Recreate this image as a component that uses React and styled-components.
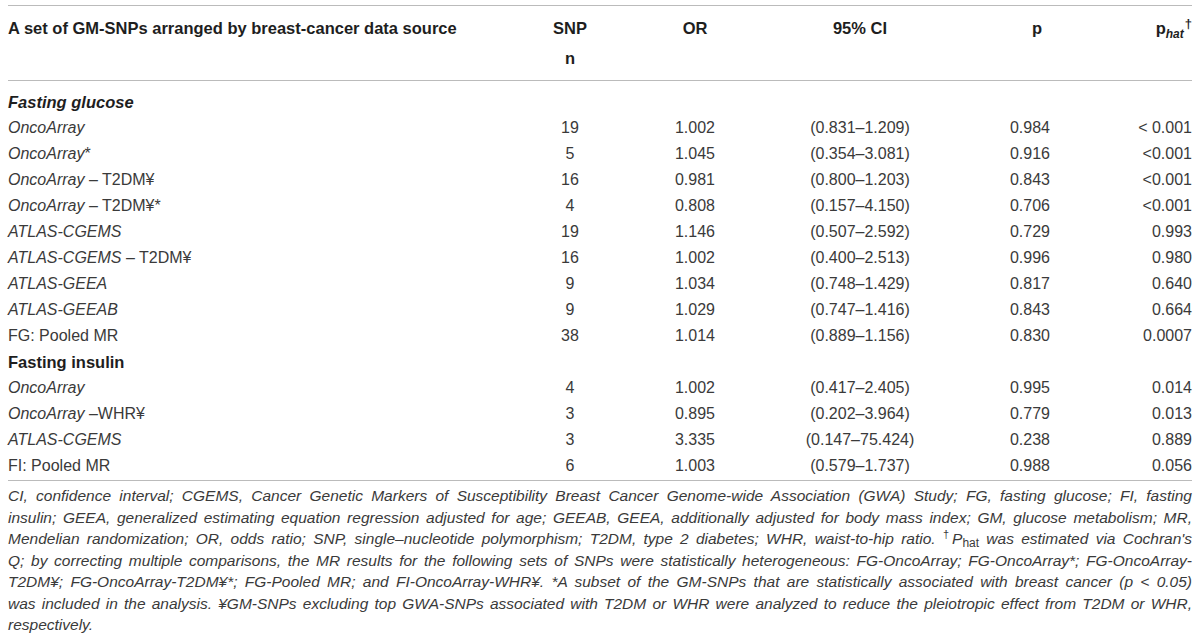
import React from 'react';
import styled, { createGlobalStyle } from 'styled-components';

const GlobalStyle = createGlobalStyle`
  html, body {
    margin: 0;
    padding: 0;
    background: #fff;
  }
  body {
    font-family: "Liberation Sans", Arial, Helvetica, sans-serif;
    color: #3a3a3a;
  }
`;

// column widths, first column holds the data source label
const COLS = '520px 84px 166px 164px 176px 74px';

const rows = [
  { type: 'group', label: 'Fasting glucose', italic: true },
  { src: 'OncoArray', rest: '', n: 19, or: '1.002', ci: '(0.831–1.209)', p: '0.984', ph: '< 0.001' },
  { src: 'OncoArray', rest: '*', n: 5, or: '1.045', ci: '(0.354–3.081)', p: '0.916', ph: '<0.001' },
  { src: 'OncoArray', rest: ' – T2DM¥', n: 16, or: '0.981', ci: '(0.800–1.203)', p: '0.843', ph: '<0.001' },
  { src: 'OncoArray', rest: ' – T2DM¥*', n: 4, or: '0.808', ci: '(0.157–4.150)', p: '0.706', ph: '<0.001' },
  { src: 'ATLAS-CGEMS', rest: '', n: 19, or: '1.146', ci: '(0.507–2.592)', p: '0.729', ph: '0.993' },
  { src: 'ATLAS-CGEMS', rest: ' – T2DM¥', n: 16, or: '1.002', ci: '(0.400–2.513)', p: '0.996', ph: '0.980' },
  { src: 'ATLAS-GEEA', rest: '', n: 9, or: '1.034', ci: '(0.748–1.429)', p: '0.817', ph: '0.640' },
  { src: 'ATLAS-GEEAB', rest: '', n: 9, or: '1.029', ci: '(0.747–1.416)', p: '0.843', ph: '0.664' },
  { src: '', rest: 'FG: Pooled MR', n: 38, or: '1.014', ci: '(0.889–1.156)', p: '0.830', ph: '0.0007' },
  { type: 'group', label: 'Fasting insulin', italic: false },
  { src: 'OncoArray', rest: '', n: 4, or: '1.002', ci: '(0.417–2.405)', p: '0.995', ph: '0.014' },
  { src: 'OncoArray', rest: ' –WHR¥', n: 3, or: '0.895', ci: '(0.202–3.964)', p: '0.779', ph: '0.013' },
  { src: 'ATLAS-CGEMS', rest: '', n: 3, or: '3.335', ci: '(0.147–75.424)', p: '0.238', ph: '0.889' },
  { src: '', rest: 'FI: Pooled MR', n: 6, or: '1.003', ci: '(0.579–1.737)', p: '0.988', ph: '0.056' },
];

const App = () => {
  return (
    <Page>
      <GlobalStyle />
      <Table>
        <Head>
          <Row>
            <HeadCell>A set of GM-SNPs arranged by breast-cancer data source</HeadCell>
            <HeadCell align="center">SNP<br />n</HeadCell>
            <HeadCell align="center">OR</HeadCell>
            <HeadCell align="center">95% CI</HeadCell>
            <HeadCell align="center" indent="14px">p</HeadCell>
            <HeadCell align="right">
              p<HatSub>hat</HatSub><Dagger>†</Dagger>
            </HeadCell>
          </Row>
        </Head>
        <Body>
          {rows.map((r, i) =>
            r.type === 'group' ? (
              <Row key={i}>
                <GroupLabel italic={r.italic}>{r.label}</GroupLabel>
              </Row>
            ) : (
              <Row key={i}>
                <Cell>
                  {r.src && <em>{r.src}</em>}
                  {r.rest}
                </Cell>
                <Cell align="center">{r.n}</Cell>
                <Cell align="center">{r.or}</Cell>
                <Cell align="center">{r.ci}</Cell>
                <Cell align="center">{r.p}</Cell>
                <Cell align="right">{r.ph}</Cell>
              </Row>
            )
          )}
        </Body>
      </Table>
      <Footnote>
        <FootLine>
          CI, confidence interval; CGEMS, Cancer Genetic Markers of Susceptibility Breast Cancer Genome-wide
          Association (GWA) Study; FG, fasting glucose; FI, fasting
        </FootLine>
        <FootLine>
          insulin; GEEA, generalized estimating equation regression adjusted for age; GEEAB, GEEA, additionally
          adjusted for body mass index; GM, glucose metabolism; MR,
        </FootLine>
        <FootLine>
          Mendelian randomization; OR, odds ratio; SNP, single–nucleotide polymorphism; T2DM, type 2 diabetes;
          WHR, waist-to-hip ratio. <Mark>†</Mark>P<NoteSub>hat</NoteSub> was estimated via Cochran's
        </FootLine>
        <FootLine>
          Q; by correcting multiple comparisons, the MR results for the following sets of SNPs were statistically
          heterogeneous: FG-OncoArray; FG-OncoArray*; FG-OncoArray-
        </FootLine>
        <FootLine>
          T2DM¥; FG-OncoArray-T2DM¥*; FG-Pooled MR; and FI-OncoArray-WHR¥. *A subset of the GM-SNPs that are
          statistically associated with breast cancer (p &lt; 0.05)
        </FootLine>
        <FootLine>
          was included in the analysis. ¥GM-SNPs excluding top GWA-SNPs associated with T2DM or WHR were analyzed
          to reduce the pleiotropic effect from T2DM or WHR,
        </FootLine>
        <FootLine last>respectively.</FootLine>
      </Footnote>
    </Page>
  );
};

const Page = styled.div`
  padding: 5px 8px 0 8px;
  width: 1184px;
`;

const Table = styled.div`
  border-top: 1px solid #bbb;
  border-bottom: 1px solid #bbb;
`;

const Head = styled.div`
  border-bottom: 1px solid #bbb;
  padding: 7px 0 7px 0;
`;

const Body = styled.div`
  padding: 8px 0 1px 0;
`;

const Row = styled.div`
  display: grid;
  grid-template-columns: ${COLS};
  align-items: start;
`;

const HeadCell = styled.div`
  font-weight: bold;
  font-size: 16.5px;
  line-height: 30px;
  color: #1e1e1e;
  text-align: ${(p) => p.align || 'left'};
  padding-left: ${(p) => p.indent || '0'};
  white-space: nowrap;
`;

const HatSub = styled.sub`
  font-style: italic;
  font-size: 12px;
  vertical-align: -4px;
  line-height: 0;
`;

const Dagger = styled.sup`
  font-size: 13px;
  vertical-align: 6px;
  line-height: 0;
  margin-left: 1px;
`;

const Cell = styled.div`
  font-size: 16px;
  line-height: 26px;
  color: #3a3a3a;
  text-align: ${(p) => p.align || 'left'};
  white-space: nowrap;
`;

const GroupLabel = styled.div`
  grid-column: 1 / -1;
  font-size: 16.5px;
  line-height: 26px;
  font-weight: bold;
  font-style: ${(p) => (p.italic ? 'italic' : 'normal')};
  color: #1e1e1e;
`;

const Footnote = styled.div`
  margin: 4px 0 0 0;
  font-size: 15.5px;
  line-height: 21.5px;
  font-style: italic;
  color: #3a3a3a;
`;

// one printed line of the note, stretched to the full width like the source
const FootLine = styled.div`
  text-align: justify;
  text-align-last: ${(p) => (p.last ? 'left' : 'justify')};
`;

const Mark = styled.sup`
  font-style: normal;
  font-size: 11px;
  vertical-align: 6px;
  line-height: 0;
`;

const NoteSub = styled.sub`
  font-style: normal;
  font-size: 12px;
  vertical-align: -3px;
  line-height: 0;
`;

export default App;
